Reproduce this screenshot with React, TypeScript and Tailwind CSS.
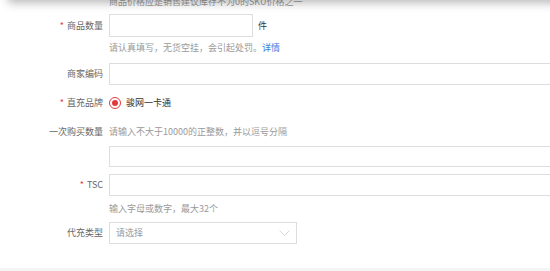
export default function App() {
    const font = { fontFamily: '"Noto Sans CJK SC", "Noto Sans", sans-serif' };

    return (
        <div className="relative w-[550px] h-[271px] overflow-hidden bg-white text-[9px] leading-[12px] text-[#666]" style={font}>
            {/* sticky header above, only its shadow shows */}
            <div className="absolute left-[8px] right-[-20px] top-[-20px] h-[20px] bg-white shadow-[0_3px_10px_rgba(0,0,0,0.28)] z-10"></div>

            <div className="flex flex-col">
                <p className="ml-[109px] mt-[-4px] h-[12px] whitespace-nowrap text-[#999]">商品价格应是销售建议库存不为0的SKU价格之一</p>

                <div className="flex items-center mt-[6px]">
                    <label className="w-[103px] shrink-0 text-right"><span className="text-[#e4393c] mr-[3px]">*</span>商品数量</label>
                    <input className="ml-[6px] w-[144px] h-[23px] border border-[#ddd] outline-none" />
                    <span className="ml-[5px] text-[#333]">件</span>
                </div>
                <p className="ml-[109px] mt-[5px] text-[#999] whitespace-nowrap">
                    请认真填写，无货空挂，会引起处罚。<span className="text-[#3a7ddc]">详情</span>
                </p>

                <div className="flex items-center mt-[9px]">
                    <label className="w-[103px] shrink-0 text-right">商家编码</label>
                    <input className="ml-[6px] w-[460px] h-[22px] shrink-0 border border-[#ddd] outline-none" />
                </div>

                <div className="flex items-center mt-[10px] h-[16px]">
                    <label className="w-[103px] shrink-0 text-right"><span className="text-[#e4393c] mr-[3px]">*</span>直充品牌</label>
                    <div className="ml-[6px] flex items-center gap-[5px] text-[#333]">
                        <span className="w-[12px] h-[12px] rounded-full border border-[#e4393c] flex items-center justify-center">
                            <span className="w-[6px] h-[6px] rounded-full bg-[#e4393c]"></span>
                        </span>
                        骏网一卡通
                    </div>
                </div>

                <div className="flex mt-[15px]">
                    <label className="w-[103px] text-right shrink-0">一次购买数量</label>
                    <div className="ml-[6px] flex flex-col">
                        <p className="text-[#999] whitespace-nowrap">请输入不大于10000的正整数，并以逗号分隔</p>
                        <input className="mt-[8px] w-[460px] h-[21px] border border-[#ddd] outline-none" />
                    </div>
                </div>

                <div className="flex items-center mt-[7px]">
                    <label className="w-[103px] shrink-0 text-right"><span className="text-[#e4393c] mr-[3px]">*</span>TSC</label>
                    <input className="ml-[6px] w-[460px] h-[22px] shrink-0 border border-[#ddd] outline-none" />
                </div>
                <p className="ml-[109px] mt-[7px] text-[#999] whitespace-nowrap">输入字母或数字，最大32个</p>

                <div className="flex items-center mt-[7px]">
                    <label className="w-[103px] shrink-0 text-right">代充类型</label>
                    <div className="ml-[6px] w-[188px] h-[22px] border border-[#ddd] flex items-center justify-between pl-[6px] pr-[6px]">
                        <span className="text-[#999]">请选择</span>
                        <svg width="11" height="6" viewBox="0 0 11 6" fill="none">
                            <path d="M0.5 0.5 L5.5 5.5 L10.5 0.5" stroke="#cfdcdc" strokeWidth="1" />
                        </svg>
                    </div>
                </div>

                <div className="mt-[24px] h-[10px] bg-[#f5f5f5]"></div>
            </div>
        </div>
    )
}
